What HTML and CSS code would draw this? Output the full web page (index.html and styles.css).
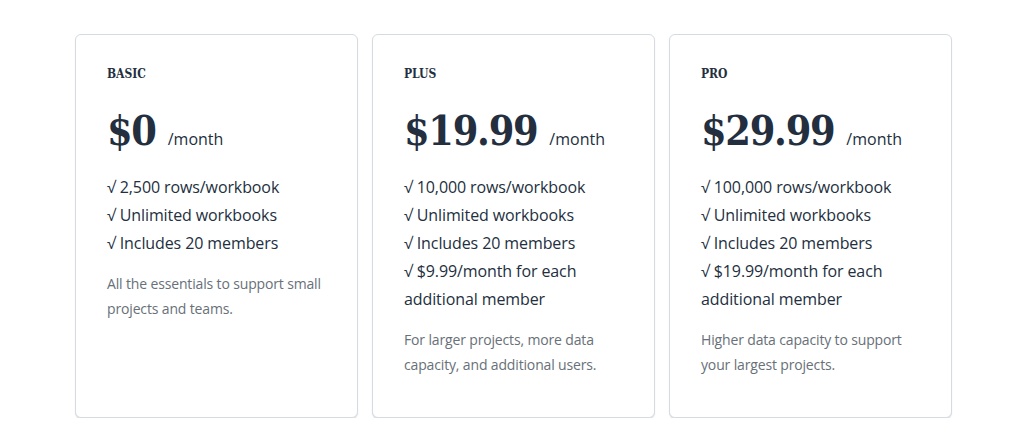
FILE: index.html
```html
<!DOCTYPE html>
<html lang="en">
<head>
<meta charset="utf-8">
<title>Pricing</title>
<link rel="stylesheet" href="styles.css">
</head>
<body>
<main class="plans">
  <section class="card">
    <h2 class="tier">BASIC</h2>
    <div class="price"><span class="amount">$0</span><span class="per">/month</span></div>
    <ul class="features">
      <li>√ 2,500 rows/workbook</li>
      <li>√ Unlimited workbooks</li>
      <li>√ Includes 20 members</li>
    </ul>
    <p class="desc">All the essentials to support small projects and teams.</p>
  </section>
  <section class="card">
    <h2 class="tier">PLUS</h2>
    <div class="price"><span class="amount">$19.99</span><span class="per">/month</span></div>
    <ul class="features">
      <li>√ 10,000 rows/workbook</li>
      <li>√ Unlimited workbooks</li>
      <li>√ Includes 20 members</li>
      <li>√ $9.99/month for each additional member</li>
    </ul>
    <p class="desc">For larger projects, more data capacity, and additional users.</p>
  </section>
  <section class="card">
    <h2 class="tier">PRO</h2>
    <div class="price"><span class="amount">$29.99</span><span class="per">/month</span></div>
    <ul class="features">
      <li>√ 100,000 rows/workbook</li>
      <li>√ Unlimited workbooks</li>
      <li>√ Includes 20 members</li>
      <li>√ $19.99/month for each additional member</li>
    </ul>
    <p class="desc">Higher data capacity to support your largest projects.</p>
  </section>
</main>
</body>
</html>
```
FILE: styles.css
```css
html, body {
  margin: 0;
  padding: 0;
  background: #ffffff;
}
body {
  font-family: "Open Sans", "Noto Sans", sans-serif;
  color: #232f3e;
}
.plans {
  display: grid;
  grid-template-columns: repeat(3, 283px);
  gap: 14px;
  justify-content: center;
  padding-top: 34px;
  margin-left: 3px;
}
.card {
  box-sizing: border-box;
  min-height: 384px;
  border: 1px solid #d5dbe0;
  border-radius: 6px;
  box-shadow: 0 1px 1px rgba(0, 28, 36, 0.14);
  padding: 31px 28px 32px 31px;
  background: #fff;
}
.tier {
  margin: 0;
  font-family: "DejaVu Serif Condensed", "DejaVu Serif", serif;
  font-stretch: condensed;
  font-weight: 700;
  font-size: 12px;
  line-height: 16px;
  color: #232f3e;
}
.price {
  display: flex;
  align-items: baseline;
  margin-top: 22px;
  height: 54px;
}
.amount {
  font-family: "DejaVu Serif Condensed", "DejaVu Serif", serif;
  font-stretch: condensed;
  font-weight: 700;
  font-size: 41px;
  line-height: 54px;
  letter-spacing: -1.3px;
}
.per {
  font-size: 16px;
  margin-left: 12px;
}
.features {
  list-style: none;
  margin: 15px 0 0;
  padding: 0;
  font-size: 16px;
  line-height: 28px;
  letter-spacing: -0.1px;
}
.desc {
  margin: 14px 0 0;
  font-size: 14px;
  line-height: 25px;
  letter-spacing: -0.15px;
  color: #687078;
}
```
